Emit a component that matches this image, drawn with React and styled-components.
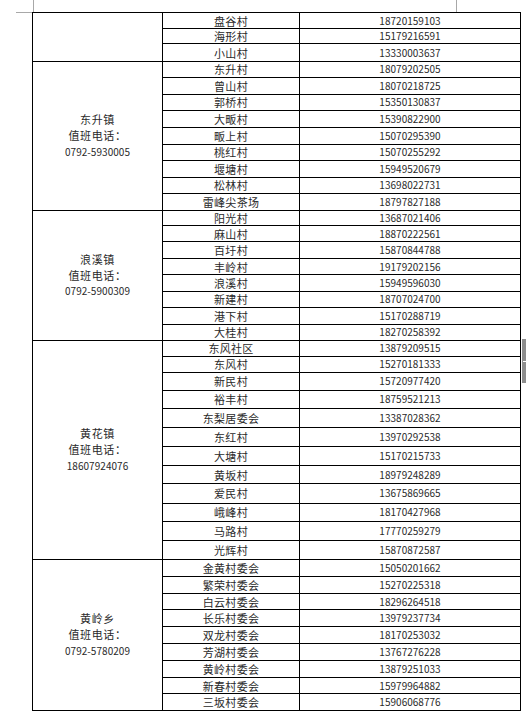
import React from "react";
import styled, { createGlobalStyle } from "styled-components";

const Global = createGlobalStyle`
  html, body { margin: 0; padding: 0; background: #ffffff; }
  body { font-family: "Noto Sans CJK SC", "Noto Sans", sans-serif; }
`;

const Page = styled.div`
  position: relative;
  width: 526px;
  height: 721px;
  overflow: hidden;
  background: #ffffff;
  padding: 12px 0 0 32px;
  box-sizing: border-box;

  /* Word page-corner crop marks */
  &::before {
    content: "";
    position: absolute;
    left: 16px;
    top: 12px;
    width: 16px;
    height: 1px;
    background: #a8a8a8;
  }
  &::after {
    content: "";
    position: absolute;
    left: 33px;
    top: 0;
    width: 424px;
    height: 12px;
    border-left: 1px solid #a8a8a8;
    border-right: 1px solid #a8a8a8;
    box-sizing: border-box;
  }
`;

const Grid = styled.div`
  display: grid;
  grid-template-columns: 130px 137px 221px;
  grid-template-rows: ${(p) => p.$rows};
  width: max-content;
  border-top: 1px solid #000;
  border-left: 1px solid #000;
`;

const Cell = styled.div`
  box-sizing: border-box;
  border-right: 1px solid #000;
  border-bottom: 1px solid #000;
  display: flex;
  align-items: center;
  justify-content: center;
  color: #2a2a2a;
  white-space: nowrap;
  overflow: hidden;
`;

const TownCell = styled(Cell)`
  grid-column: 1;
  grid-row: span ${(p) => p.$span};
  flex-direction: column;
  font-size: 11px;
  line-height: 15.8px;
  letter-spacing: 0.6px;
`;

const VillageCell = styled(Cell)`
  grid-column: 2;
  font-size: 11px;
  line-height: 12px;
  letter-spacing: 0.3px;
`;

const PhoneCell = styled(Cell)`
  grid-column: 3;
  font-size: 10px;
  line-height: 12px;
  letter-spacing: 0.02px;
`;

const TownNumber = styled.span`
  font-size: 10px;
  letter-spacing: 0.05px;
`;

const ScrollThumb = styled.div`
  position: absolute;
  left: 522px;
  top: 339px;
  width: 4px;
  height: 44px;
  background: #8e8e8e;
  &::after {
    content: "";
    position: absolute;
    left: 1px;
    top: 22px;
    width: 3px;
    height: 1px;
    background: #ffffff;
  }
`;

const groups = [
  {
    town: null,
    rows: [
      ["盘谷村", "18720159103"],
      ["海形村", "15179216591"],
      ["小山村", "13330003637"],
    ],
  },
  {
    town: ["东升镇", "值班电话：", "0792-5930005"],
    rows: [
      ["东升村", "18079202505"],
      ["曾山村", "18070218725"],
      ["郭桥村", "15350130837"],
      ["大畈村", "15390822900"],
      ["畈上村", "15070295390"],
      ["桃红村", "15070255292"],
      ["堰塘村", "15949520679"],
      ["松林村", "13698022731"],
      ["雷峰尖茶场", "18797827188"],
    ],
  },
  {
    town: ["浪溪镇", "值班电话：", "0792-5900309"],
    rows: [
      ["阳光村", "13687021406"],
      ["麻山村", "18870222561"],
      ["百圩村", "15870844788"],
      ["丰岭村", "19179202156"],
      ["浪溪村", "15949596030"],
      ["新建村", "18707024700"],
      ["港下村", "15170288719"],
      ["大桂村", "18270258392"],
    ],
  },
  {
    town: ["黄花镇", "值班电话：", "18607924076"],
    rows: [
      ["东风社区", "13879209515"],
      ["东风村", "15270181333"],
      ["新民村", "15720977420"],
      ["裕丰村", "18759521213"],
      ["东梨居委会", "13387028362"],
      ["东红村", "13970292538"],
      ["大塘村", "15170215733"],
      ["黄坂村", "18979248289"],
      ["爱民村", "13675869665"],
      ["峨峰村", "18170427968"],
      ["马路村", "17770259279"],
      ["光辉村", "15870872587"],
    ],
  },
  {
    town: ["黄岭乡", "值班电话：", "0792-5780209"],
    rows: [
      ["金黄村委会", "15050201662"],
      ["繁荣村委会", "15270225318"],
      ["白云村委会", "18296264518"],
      ["长乐村委会", "13979237734"],
      ["双龙村委会", "18170253032"],
      ["芳湖村委会", "13767276228"],
      ["黄岭村委会", "13879251033"],
      ["新春村委会", "15979964882"],
      ["三坂村委会", "15906068776"],
    ],
  },
];

// measured positions of the horizontal rules
const lines = [
  12.3, 29.7, 44.7, 62,
  78.3, 95.3, 111.3, 128.3, 145.3, 161.3, 178.3, 194.3, 211.3,
  226.7, 242.3, 259.3, 275.7, 292.3, 308.3, 325.3, 341.3,
  357.3, 373.3, 391, 409.5, 428.5, 447.3, 466.7, 484.3, 504, 522, 541.3, 560.3,
  577.3, 594.3, 610.7, 627.3, 644.3, 661.3, 678.3, 694.7, 711.7,
];

const rowHeights = lines.slice(1).map((l, i) => {
  const h = l - lines[i];
  return (i === 0 ? h - 1 : h).toFixed(2) + "px";
});

export default function App() {
  return (
    <>
      <Global />
      <Page>
        <Grid $rows={rowHeights.join(" ")}>
          {groups.map((g, gi) => (
            <React.Fragment key={gi}>
              <TownCell $span={g.rows.length}>
                {g.town && (
                  <>
                    <span>{g.town[0]}</span>
                    <span>{g.town[1]}</span>
                    <TownNumber>{g.town[2]}</TownNumber>
                  </>
                )}
              </TownCell>
              {g.rows.map(([name, phone], ri) => (
                <React.Fragment key={ri}>
                  <VillageCell>{name}</VillageCell>
                  <PhoneCell>{phone}</PhoneCell>
                </React.Fragment>
              ))}
            </React.Fragment>
          ))}
        </Grid>
        <ScrollThumb />
      </Page>
    </>
  );
}
